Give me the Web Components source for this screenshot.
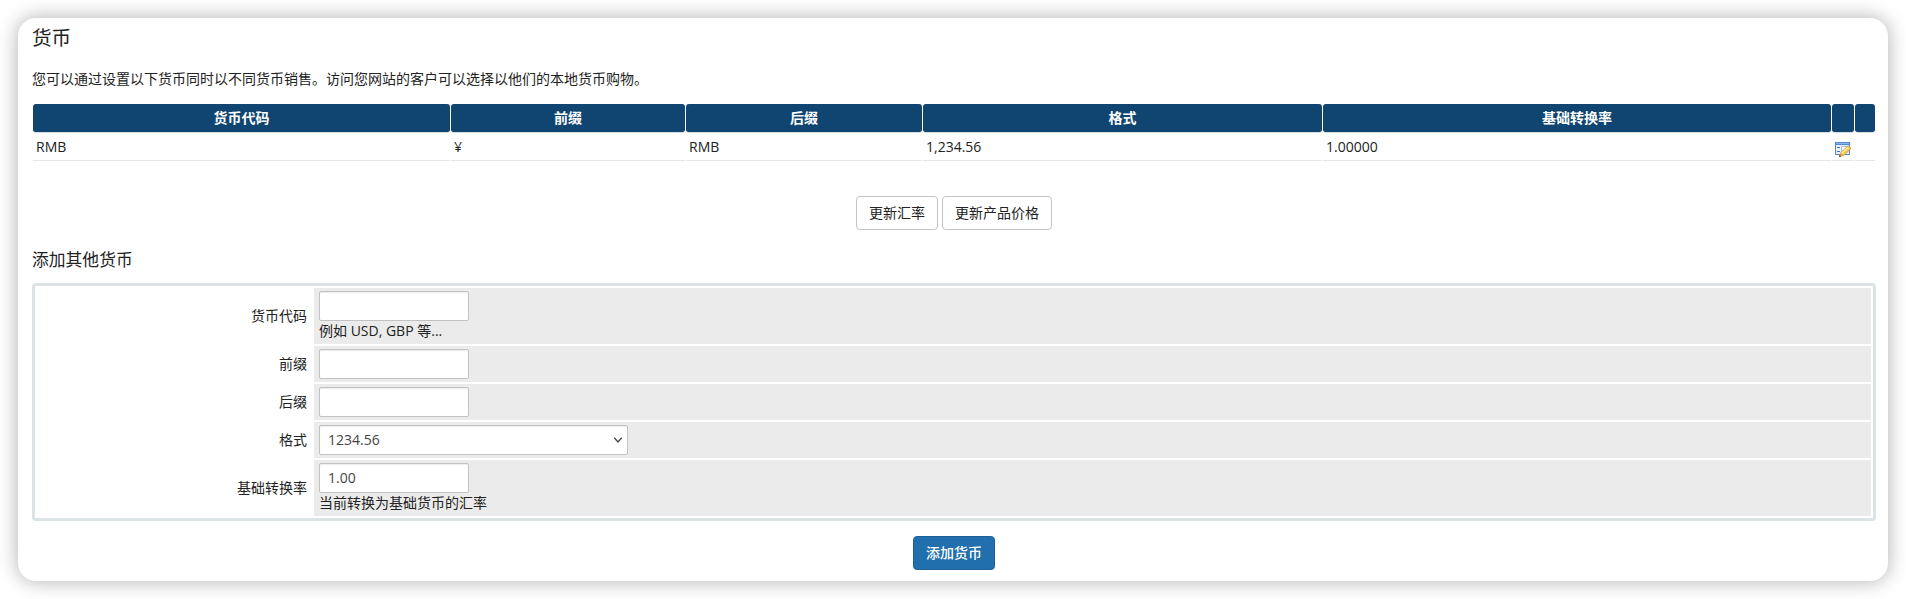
<!DOCTYPE html>
<html lang="zh-CN">
<head>
<meta charset="utf-8">
<title>货币</title>
<style>
body { margin: 0; background: #fff; }
</style>
</head>
<body>
<currency-page></currency-page>
<script>
class BaseElement extends HTMLElement {
  connectedCallback() {
    if (this.shadowRoot) return;
    this.attachShadow({ mode: 'open' }).innerHTML = this.render();
  }
}

customElements.define('ui-button', class extends BaseElement {
  render() {
    return `<style>
      :host { display: inline-block; }
      button { display: block; box-sizing: border-box; height: 34px; padding: 0 12px; margin: 0; font: inherit; line-height: 20px;
        color: #222; background: #fff; border: 1px solid #c3c3c3; border-radius: 4px; }
      :host([primary]) button { color: #fff; font-weight: 500; background: #216fad; border-color: #1c6097; }
    </style><button type="button"><slot></slot></button>`;
  }
});

customElements.define('edit-icon', class extends BaseElement {
  render() {
    return `<style>:host { display: block; width: 16px; height: 16px; } svg { display: block; }</style>
    <svg width="16" height="16" viewBox="0 0 16 16">
      <path d="M.5 1.5h14v12H.5z" fill="#eaf1fc" stroke="#5680b8"/>
      <path d="M0 1h15v3H0z" fill="#5489d2"/><path d="M1 2h13v1H1z" fill="#86b4ee"/>
      <path d="M2 6.5h3M2 10.5h3" stroke="#3d71bd"/>
      <path d="M6.5 5.5h6v5h-6z" fill="#fff" stroke="#b4bfce"/>
      <path d="M5.2 12.2L12.4 5.4q1-.7 2 .2l1 .9q.7.9-.1 1.8l-7.200 6.700z" fill="#f7c95a" stroke="#c68b35" stroke-width=".8"/>
      <path d="M6.600 12.400L13.200 6.200" stroke="#fff0b0" stroke-width="1.200"/>
      <path d="M4.200 15.800l1-3.900 3 3z" fill="#dda272"/><path d="M4 16l.6-2.200 1.700 1.600z" fill="#5b351c"/>
    </svg>`;
  }
});

customElements.define('currency-table', class extends BaseElement {
  render() {
    const heads = ['货币代码', '前缀', '后缀', '格式', '基础转换率', '', ''];
    const cells = ['RMB', '¥', 'RMB', '1,234.56', '1.00000', '<edit-icon></edit-icon>', ''];
    return `<style>
      :host { display: block; margin: 0 1px; }
      .grid { display: grid; grid-template-columns: 417px 234px 236px 399px 508px 22px 20px; column-gap: 1px; }
      .th { box-sizing: border-box; height: 29px; padding-top: 4px; line-height: 20px; text-align: center; font-weight: 700; color: #fff;
        background: #0f4570 padding-box; border-bottom: 1px solid #d8dde2; border-radius: 3px; }
      .td { box-sizing: border-box; height: 28px; padding: 4px 3px 3px; line-height: 20px; border-bottom: 1px solid #e6e6e6; }
      edit-icon { margin-top: 4px; }
    </style><div class="grid">
      ${heads.map(h => `<div class="th">${h}</div>`).join('')}
      ${cells.map(c => `<div class="td">${c}</div>`).join('')}
    </div>`;
  }
});

customElements.define('text-field', class extends BaseElement {
  render() {
    return `<style>
      :host { display: block; width: 150px; }
      input { display: block; box-sizing: border-box; width: 100%; height: 30px; margin: 0; padding: 0 8px 1px; font: inherit; color: #444;
        background: #fff; border: 1px solid #c2c2c2; border-radius: 2px; box-shadow: inset 0 1px 1px rgba(0,0,0,.075); outline: 0; }
    </style><input type="text" value="${this.getAttribute('value') || ''}">`;
  }
});

customElements.define('select-field', class extends BaseElement {
  render() {
    return `<style>
      :host { display: flex; align-items: center; justify-content: space-between; box-sizing: border-box; width: 309px; height: 30px;
        padding: 0 4px 1px 8px; color: #444; background: #fff; border: 1px solid #c2c2c2; border-radius: 2px;
        box-shadow: inset 0 1px 1px rgba(0,0,0,.075); }
      svg { display: block; margin-top: 1px; }
    </style><span><slot></slot></span>
    <svg width="10" height="8" viewBox="0 0 10 8"><path d="M1.3 1.700L5 5.900l3.700-4.200" fill="none" stroke="#444" stroke-width="1.300"/></svg>`;
  }
});

customElements.define('form-row', class extends BaseElement {
  render() {
    const help = this.getAttribute('help');
    return `<style>
      :host { display: grid; grid-template-columns: 275px 1fr; column-gap: 2px; }
      .label { display: flex; align-items: center; justify-content: flex-end; padding-right: 5px; line-height: 20px; }
      .area { padding: 3px 5px; background: #ebebeb; }
      .help { height: 20px; line-height: 20px; }
    </style><div class="label">${this.getAttribute('label')}</div>
    <div class="area"><slot></slot>${help ? `<div class="help">${help}</div>` : ''}</div>`;
  }
});

customElements.define('form-box', class extends BaseElement {
  render() {
    return `<style>
      :host { display: grid; row-gap: 2px; box-sizing: border-box; padding: 2px; border: 3px solid #dce3e5; border-radius: 4px; }
    </style><slot></slot>`;
  }
});

customElements.define('currency-page', class extends BaseElement {
  render() {
    return `<style>
      :host { display: block; box-sizing: border-box; height: 599px; padding: 18px; overflow: hidden;
        font: 14px/20px "Open Sans", "Noto Sans CJK SC", sans-serif; color: #222; }
      main { box-sizing: border-box; height: 563px; padding: 6px 12px 0 14px; background: #fff; border-radius: 18px;
        box-shadow: 0 0 20px rgba(0,0,0,.32); }
      h1 { margin: 0; font-size: 19.6px; line-height: 28px; font-weight: 400; }
      p { margin: 17px 0 15px; height: 20px; }
      h2 { margin: 20px 0 13px; font-size: 16.8px; line-height: 20px; font-weight: 400; }
      .actions { display: flex; justify-content: center; gap: 4px; }
      .rates { margin-top: 35px; }
      .submit { margin-top: 15px; }
    </style>
    <main>
      <h1>货币</h1>
      <p>您可以通过设置以下货币同时以不同货币销售。访问您网站的客户可以选择以他们的本地货币购物。</p>
      <currency-table></currency-table>
      <div class="actions rates"><ui-button>更新汇率</ui-button><ui-button>更新产品价格</ui-button></div>
      <h2>添加其他货币</h2>
      <form-box>
        <form-row label="货币代码" help="例如 USD, GBP 等..."><text-field></text-field></form-row>
        <form-row label="前缀"><text-field></text-field></form-row>
        <form-row label="后缀"><text-field></text-field></form-row>
        <form-row label="格式"><select-field>1234.56</select-field></form-row>
        <form-row label="基础转换率" help="当前转换为基础货币的汇率"><text-field value="1.00"></text-field></form-row>
      </form-box>
      <div class="actions submit"><ui-button primary>添加货币</ui-button></div>
    </main>`;
  }
});
</script>
</body>
</html>
